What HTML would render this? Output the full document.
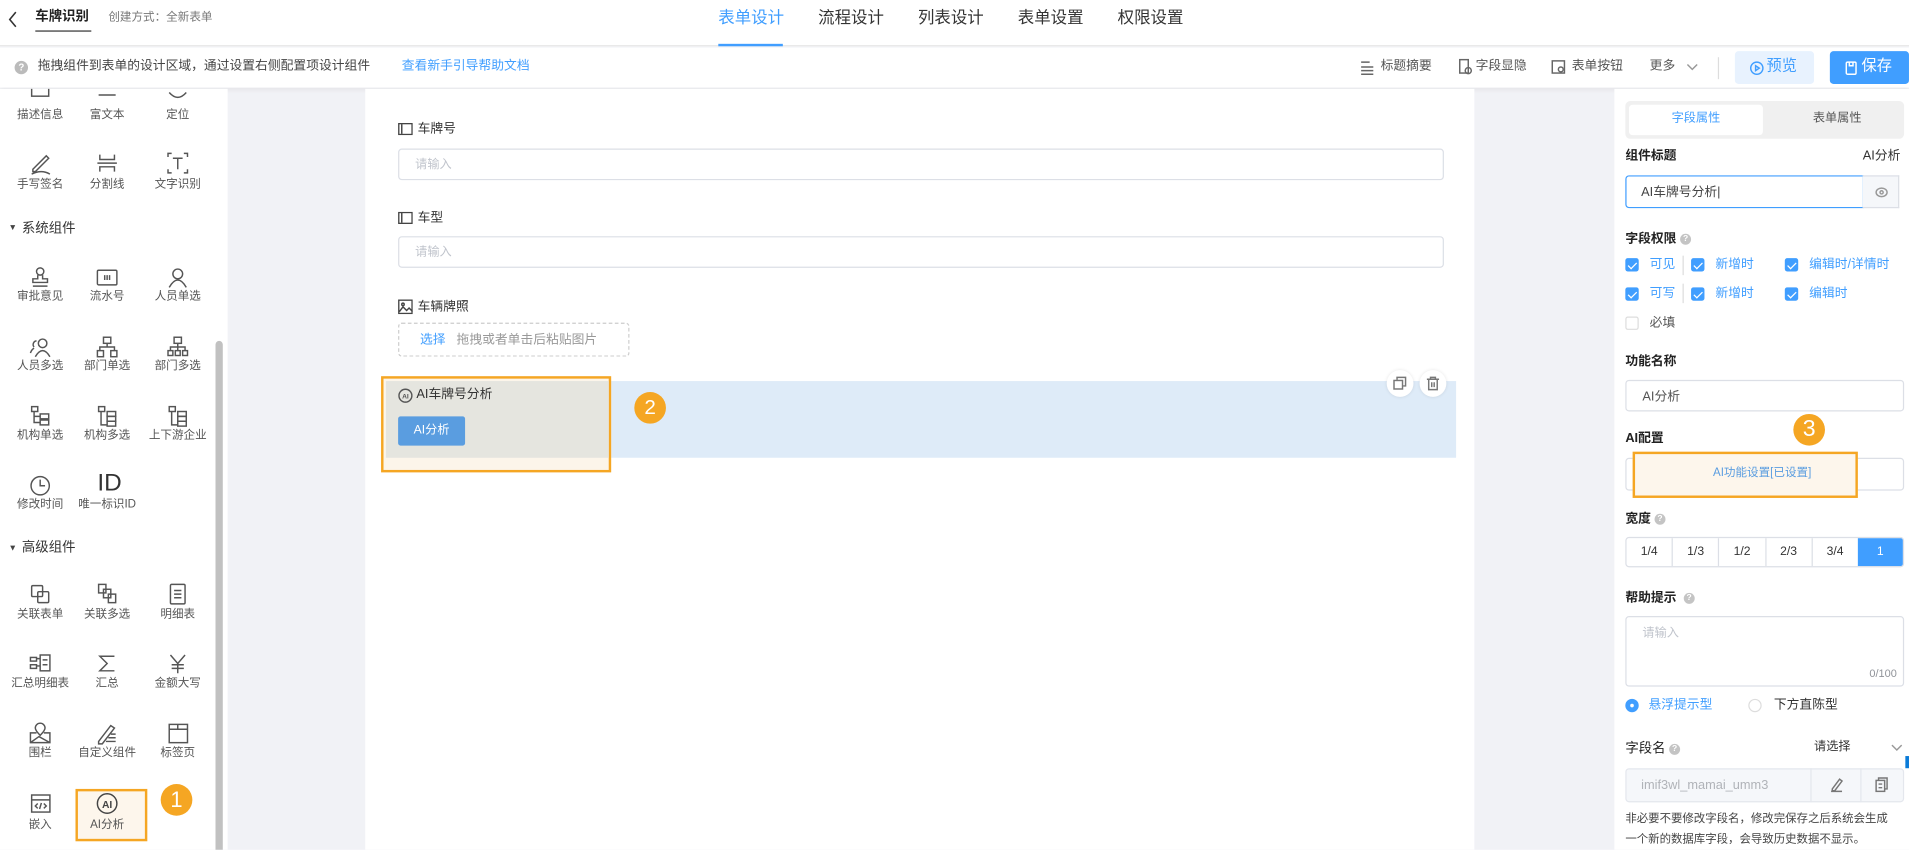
<!DOCTYPE html>
<html><head><meta charset="utf-8">
<style>
*{box-sizing:border-box;margin:0;padding:0}
html,body{width:1909px;height:850px;overflow:hidden;background:#fff}
body{font-family:"Liberation Sans","Noto Sans CJK SC",sans-serif;color:#333}
#w{position:absolute;left:0;top:0;width:1568px;height:698px;transform:scale(1.21747);transform-origin:0 0;overflow:hidden;background:#f1f2f6}
.a{position:absolute}
.t{position:absolute;white-space:nowrap;line-height:1}
.ic{position:absolute;width:20px;height:20px}
.lb{position:absolute;font-size:9.5px;color:#555;white-space:nowrap;text-align:center;width:60px;line-height:1}
.inp{position:absolute;background:#fff;border:1px solid #dcdfe6;border-radius:3px}
.ph{color:#c0c4cc;font-size:10px}
.cb{position:absolute;width:11px;height:11px;border-radius:2px;background:#409eff}
.cb:after{content:"";position:absolute;left:3.5px;top:1.5px;width:3px;height:5.5px;border:solid #fff;border-width:0 1.3px 1.3px 0;transform:rotate(45deg)}
.ct{position:absolute;font-size:10.5px;color:#409eff;white-space:nowrap;line-height:1}
.h{position:absolute;font-size:10.5px;font-weight:bold;color:#222;white-space:nowrap;line-height:1}
.q{display:inline-block;width:9px;height:9px;border-radius:50%;background:#c4c4c4;color:#fff;font-size:7px;text-align:center;line-height:9px;vertical-align:1px;margin-left:3px;font-weight:bold}
.badge{position:absolute;width:26px;height:26px;border-radius:50%;background:#f5a623;color:#fff;font-size:18px;text-align:center;line-height:26px}
svg{stroke:#555;fill:none;stroke-width:1.2}
</style></head><body><div id="w">

<div class="a" style="left:0;top:0;width:1568px;height:38px;background:#fff;border-bottom:1px solid #e8e8e8"></div>
<svg class="a" style="left:6px;top:9px" width="10" height="14"><path d="M7 1 L2 7 L7 13" stroke="#333" stroke-width="1.3"/></svg>
<div class="t" style="left:29px;top:9px;font-size:11px;color:#222;font-weight:bold">车牌识别</div>
<div class="a" style="left:29px;top:25px;width:46px;height:1px;background:#333"></div>
<div class="t" style="left:89px;top:10px;font-size:9.5px;color:#777">创建方式：全新表单</div>
<div class="t" style="left:590px;top:8px;font-size:13.5px;color:#409eff">表单设计</div>
<div class="a" style="left:590px;top:36px;width:53px;height:2px;background:#409eff"></div>
<div class="t" style="left:672px;top:8px;font-size:13.5px;color:#333">流程设计</div>
<div class="t" style="left:754px;top:8px;font-size:13.5px;color:#333">列表设计</div>
<div class="t" style="left:836px;top:8px;font-size:13.5px;color:#333">表单设置</div>
<div class="t" style="left:918px;top:8px;font-size:13.5px;color:#333">权限设置</div>

<div class="a" style="left:0;top:39px;width:1568px;height:33px;background:#fff;box-shadow:0 2px 4px rgba(0,0,0,.06)"></div>
<div class="a" style="left:12px;top:50px;width:11px;height:11px;border-radius:50%;background:#bbb;color:#fff;font-size:8px;text-align:center;line-height:11px;font-weight:bold">?</div>
<div class="t" style="left:31px;top:49px;font-size:10.5px;color:#444">拖拽组件到表单的设计区域，通过设置右侧配置项设计组件</div>
<div class="t" style="left:330px;top:49px;font-size:10.5px;color:#409eff">查看新手引导帮助文档</div>
<svg class="a" style="left:1117px;top:48px" width="12" height="14"><path d="M1 3h7M1 7h10M1 10h10M1 13h10" stroke="#666"/></svg>
<div class="t" style="left:1134px;top:49px;font-size:10.5px;color:#555">标题摘要</div>
<svg class="a" style="left:1198px;top:48px" width="12" height="14"><rect x="1" y="1" width="7" height="11" stroke="#666"/><circle cx="8" cy="10" r="2.5" stroke="#666"/></svg>
<div class="t" style="left:1212px;top:49px;font-size:10.5px;color:#555">字段显隐</div>
<svg class="a" style="left:1274px;top:48px" width="13" height="14"><rect x="1" y="2" width="10" height="10" stroke="#666"/><circle cx="8" cy="9" r="2" stroke="#666"/></svg>
<div class="t" style="left:1291px;top:49px;font-size:10.5px;color:#555">表单按钮</div>
<div class="t" style="left:1355px;top:49px;font-size:10.5px;color:#555">更多</div>
<svg class="a" style="left:1385px;top:52px" width="10" height="6"><path d="M1 1l4 4 4-4" stroke="#999"/></svg>
<div class="a" style="left:1411px;top:47px;width:1px;height:18px;background:#ddd"></div>
<div class="a" style="left:1425px;top:42px;width:65px;height:27px;background:#e8f2fe;border-radius:3px"></div>
<svg class="a" style="left:1437px;top:50px" width="12" height="12"><circle cx="6" cy="6" r="5" stroke="#409eff"/><path d="M5 4l3 2-3 2z" stroke="#409eff"/></svg>
<div class="t" style="left:1451px;top:48px;font-size:12.5px;color:#409eff">预览</div>
<div class="a" style="left:1503px;top:42px;width:65px;height:27px;background:#409eff;border-radius:3px"></div>
<svg class="a" style="left:1515px;top:50px" width="11" height="12"><rect x="1.5" y="1" width="8" height="10" rx="1" stroke="#fff"/><path d="M4 1v3h3V1" stroke="#fff"/></svg>
<div class="t" style="left:1529px;top:48px;font-size:12.5px;color:#fff">保存</div>

<div class="a" style="left:0;top:73px;width:187px;height:625px;background:#fff"></div>
<div class="a" style="left:177px;top:280px;width:6px;height:557px;background:#c1c1c1;border-radius:3px"></div>

<svg class="ic" style="left:23px;top:73px"><rect x="3" y="-5" width="14" height="11" stroke="#555"/></svg>
<svg class="ic" style="left:78px;top:73px"><path d="M3 5h14" stroke="#555"/></svg>
<svg class="ic" style="left:136px;top:73px"><path d="M3 3q7 8 14 0" stroke="#555"/></svg>
<div class="lb" style="left:3px;top:90px">描述信息</div>
<div class="lb" style="left:58px;top:90px">富文本</div>
<div class="lb" style="left:116px;top:90px">定位</div>

<svg class="ic" style="left:23px;top:124px"><path d="M4 15L15 4l2 2L6 17H4z M3 19q8-4 15 0"/></svg>
<svg class="ic" style="left:78px;top:124px"><path d="M4 3v4h12V3M4 17v-4h12v4M2 10h16"/></svg>
<svg class="ic" style="left:136px;top:124px"><path d="M2 5V2h3M15 2h3v3M2 15v3h3M15 18h3v-3M6 6h8M10 6v9"/></svg>
<div class="lb" style="left:3px;top:147px">手写签名</div>
<div class="lb" style="left:58px;top:147px">分割线</div>
<div class="lb" style="left:116px;top:147px">文字识别</div>

<div class="t" style="left:7px;top:184px;font-size:7px;color:#444">▼</div>
<div class="t" style="left:18px;top:183px;font-size:11px;color:#333">系统组件</div>

<svg class="ic" style="left:23px;top:218px"><circle cx="10" cy="5" r="3"/><path d="M8 8v3H4v3h12v-3h-4V8M4 17h12"/></svg>
<svg class="ic" style="left:78px;top:218px"><rect x="2" y="4" width="16" height="12" rx="1"/><path d="M8 8v4M10 8v4M12 8v4"/></svg>
<svg class="ic" style="left:136px;top:218px"><circle cx="10" cy="7" r="4"/><path d="M3 18q7-12 14 0"/></svg>
<div class="lb" style="left:3px;top:239px">审批意见</div>
<div class="lb" style="left:58px;top:239px">流水号</div>
<div class="lb" style="left:116px;top:239px">人员单选</div>

<svg class="ic" style="left:23px;top:275px"><circle cx="12" cy="7" r="3.5"/><path d="M6 18q6-10 12 0M7 5a3 3 0 0 0-2 5M2 15q1-3 3-4"/></svg>
<svg class="ic" style="left:78px;top:275px"><rect x="7" y="2" width="6" height="5"/><rect x="2" y="13" width="5" height="5"/><rect x="13" y="13" width="5" height="5"/><path d="M10 7v3H4v3M10 10h6v3"/></svg>
<svg class="ic" style="left:136px;top:275px"><rect x="7" y="2" width="6" height="5"/><rect x="2" y="13" width="4" height="4"/><rect x="8" y="13" width="4" height="4"/><rect x="14" y="13" width="4" height="4"/><path d="M10 7v6M4 13v-3h12v3"/></svg>
<div class="lb" style="left:3px;top:296px">人员多选</div>
<div class="lb" style="left:58px;top:296px">部门单选</div>
<div class="lb" style="left:116px;top:296px">部门多选</div>

<svg class="ic" style="left:23px;top:332px"><rect x="3" y="2" width="5" height="4"/><path d="M5 6v9h5M5 10h5"/><rect x="10" y="8" width="7" height="4"/><rect x="10" y="13" width="7" height="4"/></svg>
<svg class="ic" style="left:78px;top:332px"><rect x="3" y="2" width="5" height="4"/><path d="M5 6v11h5"/><rect x="10" y="6" width="7" height="4"/><rect x="10" y="10" width="7" height="4"/><rect x="10" y="14" width="7" height="4"/></svg>
<svg class="ic" style="left:136px;top:332px"><rect x="3" y="2" width="5" height="4"/><path d="M5 6v11h5"/><rect x="10" y="6" width="7" height="4"/><rect x="10" y="10" width="7" height="4"/><rect x="10" y="14" width="7" height="4"/></svg>
<div class="lb" style="left:3px;top:353px">机构单选</div>
<div class="lb" style="left:58px;top:353px">机构多选</div>
<div class="lb" style="left:116px;top:353px">上下游企业</div>

<svg class="ic" style="left:23px;top:389px"><circle cx="10" cy="10" r="7.5"/><path d="M10 5v5h4"/></svg>
<div class="t" style="left:80px;top:387px;font-size:20px;color:#333;font-weight:300">ID</div>
<div class="lb" style="left:3px;top:410px">修改时间</div>
<div class="lb" style="left:58px;top:410px">唯一标识ID</div>

<div class="t" style="left:7px;top:447px;font-size:7px;color:#444">▼</div>
<div class="t" style="left:18px;top:445px;font-size:11px;color:#333">高级组件</div>

<svg class="ic" style="left:23px;top:478px"><rect x="3" y="3" width="9" height="9" rx="1"/><rect x="8" y="8" width="9" height="9" rx="1"/></svg>
<svg class="ic" style="left:78px;top:478px"><rect x="3" y="2" width="6" height="7"/><rect x="7" y="6" width="6" height="7"/><rect x="11" y="10" width="6" height="7"/></svg>
<svg class="ic" style="left:136px;top:478px"><rect x="4" y="2" width="12" height="16" rx="1"/><path d="M7 7h6M7 10h6M7 13h6"/></svg>
<div class="lb" style="left:3px;top:500px">关联表单</div>
<div class="lb" style="left:58px;top:500px">关联多选</div>
<div class="lb" style="left:116px;top:500px">明细表</div>

<svg class="ic" style="left:23px;top:535px"><rect x="2" y="5" width="5" height="3"/><rect x="2" y="11" width="5" height="3"/><rect x="10" y="3" width="8" height="13"/><path d="M7 6h3M7 12h3M12 7h4M12 11h4"/></svg>
<svg class="ic" style="left:78px;top:535px"><path d="M16 4H4l6 6-6 6h12"/></svg>
<svg class="ic" style="left:136px;top:535px"><path d="M4 3l6 7 6-7M10 10v8M5 11h10M5 14h10"/></svg>
<div class="lb" style="left:3px;top:557px">汇总明细表</div>
<div class="lb" style="left:58px;top:557px">汇总</div>
<div class="lb" style="left:116px;top:557px">金额大写</div>

<svg class="ic" style="left:23px;top:592px"><path d="M10 12q-4-4-4-6a4 4 0 0 1 8 0q0 2-4 6z M7 10H2v8h16v-8h-5M2 18l7-5 9 5"/></svg>
<svg class="ic" style="left:78px;top:592px"><path d="M3 17L13 4l3 2L6 19H3zM11 14h6M13 11h4M9 17h8"/></svg>
<svg class="ic" style="left:136px;top:592px"><rect x="3" y="3" width="15" height="15"/><path d="M3 7h15M10 3v4"/></svg>
<div class="lb" style="left:3px;top:614px">围栏</div>
<div class="lb" style="left:58px;top:614px">自定义组件</div>
<div class="lb" style="left:116px;top:614px">标签页</div>

<div class="a" style="left:62px;top:648px;width:59px;height:43px;border:2px solid #f5a623;background:#fdf6ec"></div>
<svg class="ic" style="left:23px;top:650px"><rect x="3" y="3" width="15" height="14"/><path d="M3 7h15M8 10l-2 2 2 2M13 10l2 2-2 2M11 9.5l-1.5 5"/></svg>
<svg class="ic" style="left:78px;top:650px"><circle cx="10" cy="10" r="8" stroke="#444"/><text x="10" y="13.5" font-size="8.5" text-anchor="middle" fill="#444" stroke="none" font-family="Liberation Sans" font-weight="bold">AI</text></svg>
<div class="lb" style="left:3px;top:673px">嵌入</div>
<div class="lb" style="left:58px;top:673px">AI分析</div>
<div class="badge" style="left:132px;top:644px">1</div>

<div class="a" style="left:300px;top:73px;width:911px;height:625px;background:#fff"></div>
<svg class="a" style="left:327px;top:101px" width="12" height="10"><rect x="0.5" y="0.5" width="11" height="9" stroke="#444"/><path d="M3 1v8" stroke="#444"/></svg>
<div class="t" style="left:343px;top:101px;font-size:10.5px;color:#333">车牌号</div>
<div class="inp" style="left:327px;top:122px;width:859px;height:26px"><span class="t ph" style="left:13px;top:8px">请输入</span></div>
<svg class="a" style="left:327px;top:174px" width="12" height="10"><rect x="0.5" y="0.5" width="11" height="9" stroke="#444"/><path d="M3 1v8" stroke="#444"/></svg>
<div class="t" style="left:343px;top:174px;font-size:10.5px;color:#333">车型</div>
<div class="inp" style="left:327px;top:194px;width:859px;height:26px"><span class="t ph" style="left:13px;top:8px">请输入</span></div>
<svg class="a" style="left:327px;top:246px" width="12" height="12"><rect x="0.5" y="0.5" width="11" height="11" stroke="#444"/><path d="M1 10l3-4 3 3 2-2 3 3" stroke="#444"/><circle cx="4" cy="4" r="1" stroke="#444"/></svg>
<div class="t" style="left:343px;top:247px;font-size:10.5px;color:#333">车辆牌照</div>
<div class="a" style="left:327px;top:265px;width:190px;height:28px;border:1px dashed #ccc;border-radius:3px"></div>
<div class="t" style="left:345px;top:274px;font-size:10.5px;color:#409eff">选择</div>
<div class="t" style="left:375px;top:274px;font-size:10.5px;color:#999">拖拽或者单击后粘贴图片</div>

<div class="a" style="left:316px;top:313px;width:880px;height:63px;background:#deebf8"></div>
<div class="a" style="left:313px;top:309px;width:189px;height:79px;border:2px solid #f5a623;background:#fcf5ea"></div>
<div class="a" style="left:317px;top:313px;width:183px;height:63px;background:#e5e5df"></div>
<svg class="a" style="left:327px;top:319px" width="12" height="12"><circle cx="6" cy="6" r="5.3" stroke="#555"/><text x="6" y="8.3" font-size="5.5" text-anchor="middle" fill="#555" stroke="none" font-family="Liberation Sans" font-weight="bold">AI</text></svg>
<div class="t" style="left:342px;top:319px;font-size:10.5px;color:#333">AI车牌号分析</div>
<div class="a" style="left:327px;top:342px;width:55px;height:24px;background:#5a9de0;border-radius:2px;color:#fff;font-size:10px;text-align:center;line-height:24px">AI分析</div>
<div class="badge" style="left:521px;top:322px;font-size:17px">2</div>
<div class="a" style="left:1139px;top:304px;width:22px;height:22px;border-radius:50%;background:#fff;box-shadow:0 0 3px rgba(0,0,0,.1)"></div>
<svg class="a" style="left:1144px;top:309px" width="12" height="12"><rect x="1" y="3.5" width="7" height="7" stroke="#777"/><path d="M3.5 3V1h7v7H8.5" stroke="#777"/></svg>
<div class="a" style="left:1166px;top:304px;width:22px;height:22px;border-radius:50%;background:#fff;box-shadow:0 0 3px rgba(0,0,0,.1)"></div>
<svg class="a" style="left:1171px;top:309px" width="12" height="12"><path d="M1 2.5h10M4 2.5V1h4v1.5M2.5 2.5v8.5h7V2.5M5 5v4M7 5v4" stroke="#777"/></svg>

<div class="a" style="left:1326px;top:73px;width:242px;height:625px;background:#fff"></div>
<div class="a" style="left:1335px;top:83px;width:229px;height:31px;background:#f0f0f0;border-radius:4px"></div>
<div class="a" style="left:1338px;top:86px;width:110px;height:25px;background:#fff;border-radius:3px"></div>
<div class="t" style="left:1373px;top:93px;font-size:10px;color:#409eff">字段属性</div>
<div class="t" style="left:1489px;top:93px;font-size:10px;color:#555">表单属性</div>

<div class="h" style="left:1335px;top:123px">组件标题</div>
<div class="t" style="left:1530px;top:123px;font-size:10.5px;color:#333">AI分析</div>
<div class="a" style="left:1335px;top:144px;width:196px;height:27px;border:1px solid #409eff;border-radius:3px 0 0 3px;background:#fff"></div>
<div class="t" style="left:1348px;top:153px;font-size:10.5px;color:#444">AI车牌号分析|</div>
<div class="a" style="left:1530px;top:144px;width:30px;height:27px;border:1px solid #dcdfe6;border-left:none;background:#f5f7fa"></div>
<svg class="a" style="left:1540px;top:152px" width="11" height="11"><ellipse cx="5.5" cy="6" rx="4.5" ry="3.5" stroke="#999"/><circle cx="5.5" cy="6" r="1.3" stroke="#999"/></svg>

<div class="h" style="left:1335px;top:191px">字段权限<span class="q">?</span></div>
<div class="cb" style="left:1335px;top:212px"></div><div class="ct" style="left:1355px;top:212px">可见</div>
<div class="a" style="left:1382px;top:210px;width:1px;height:16px;background:#ddd"></div>
<div class="cb" style="left:1389px;top:212px"></div><div class="ct" style="left:1409px;top:212px">新增时</div>
<div class="cb" style="left:1466px;top:212px"></div><div class="ct" style="left:1486px;top:212px">编辑时/详情时</div>
<div class="cb" style="left:1335px;top:236px"></div><div class="ct" style="left:1355px;top:236px">可写</div>
<div class="a" style="left:1382px;top:233px;width:1px;height:16px;background:#ddd"></div>
<div class="cb" style="left:1389px;top:236px"></div><div class="ct" style="left:1409px;top:236px">新增时</div>
<div class="cb" style="left:1466px;top:236px"></div><div class="ct" style="left:1486px;top:236px">编辑时</div>
<div class="a" style="left:1335px;top:260px;width:11px;height:11px;border:1px solid #ddd;border-radius:2px"></div><div class="ct" style="left:1355px;top:260px;color:#555">必填</div>

<div class="h" style="left:1335px;top:292px">功能名称</div>
<div class="inp" style="left:1335px;top:312px;width:229px;height:26px"><span class="t" style="left:13px;top:8px;font-size:10.5px;color:#555">AI分析</span></div>

<div class="h" style="left:1335px;top:355px">AI配置</div>
<div class="inp" style="left:1335px;top:376px;width:229px;height:27px"></div>
<div class="a" style="left:1341px;top:371px;width:185px;height:38px;border:2px solid #f5a623;background:#fdf6ec"></div>
<div class="t" style="left:1407px;top:384px;font-size:9.5px;color:#5a9de0">AI功能设置[已设置]</div>
<div class="badge" style="left:1473px;top:340px;font-size:19px">3</div>

<div class="h" style="left:1335px;top:421px">宽度<span class="q">?</span></div>
<div class="a" style="left:1335px;top:441px;width:229px;height:25px;border:1px solid #dcdfe6;border-radius:3px;display:flex;font-size:10px;color:#333;overflow:hidden">
<div style="flex:1;text-align:center;line-height:23px;border-right:1px solid #dcdfe6">1/4</div>
<div style="flex:1;text-align:center;line-height:23px;border-right:1px solid #dcdfe6">1/3</div>
<div style="flex:1;text-align:center;line-height:23px;border-right:1px solid #dcdfe6">1/2</div>
<div style="flex:1;text-align:center;line-height:23px;border-right:1px solid #dcdfe6">2/3</div>
<div style="flex:1;text-align:center;line-height:23px">3/4</div>
<div style="flex:1;text-align:center;line-height:23px;background:#409eff;color:#fff">1</div></div>

<div class="h" style="left:1335px;top:486px">帮助提示 <span class="q">?</span></div>
<div class="inp" style="left:1335px;top:506px;width:229px;height:58px"><span class="t ph" style="left:13px;top:9px">请输入</span><span class="t" style="right:5px;bottom:5px;font-size:9px;color:#909399">0/100</span></div>
<div class="a" style="left:1335px;top:574px;width:11px;height:11px;border-radius:50%;background:#409eff"></div>
<div class="a" style="left:1339px;top:578px;width:3px;height:3px;border-radius:50%;background:#fff"></div>
<div class="ct" style="left:1354px;top:574px">悬浮提示型</div>
<div class="a" style="left:1436px;top:574px;width:11px;height:11px;border-radius:50%;border:1px solid #ddd"></div>
<div class="ct" style="left:1457px;top:574px;color:#333">下方直陈型</div>

<div class="h" style="left:1335px;top:610px;font-weight:normal;font-size:11px">字段名<span class="q">?</span></div>
<div class="t" style="left:1490px;top:609px;font-size:10px;color:#333">请选择</div>
<svg class="a" style="left:1553px;top:611px" width="10" height="6"><path d="M1 1l4 4 4-4" stroke="#999"/></svg>
<div class="a" style="left:1565px;top:621px;width:3px;height:10px;background:#0a7bd8"></div>
<div class="a" style="left:1335px;top:631px;width:229px;height:28px;border:1px solid #e4e7ed;border-radius:3px;background:#f5f7fa"></div>
<div class="a" style="left:1487px;top:631px;width:1px;height:28px;background:#e4e7ed"></div>
<div class="a" style="left:1528px;top:631px;width:1px;height:28px;background:#e4e7ed"></div>
<div class="t" style="left:1348px;top:640px;font-size:10.5px;color:#b0b3b8">imif3wl_mamai_umm3</div>
<svg class="a" style="left:1502px;top:638px" width="12" height="13"><path d="M3 10L9 2l2 1.5-6 8H3zM2 12h9" stroke="#777"/></svg>
<svg class="a" style="left:1540px;top:638px" width="12" height="13"><rect x="1" y="3" width="7" height="9" stroke="#777"/><path d="M3 3V1h7v9H8M3 6h3M3 9h3" stroke="#777"/></svg>
<div class="t" style="left:1335px;top:667px;font-size:9.4px;color:#444">非必要不要修改字段名，修改完保存之后系统会生成</div>
<div class="t" style="left:1335px;top:684px;font-size:9.4px;color:#444">一个新的数据库字段，会导致历史数据不显示。</div>
</div></body></html>
